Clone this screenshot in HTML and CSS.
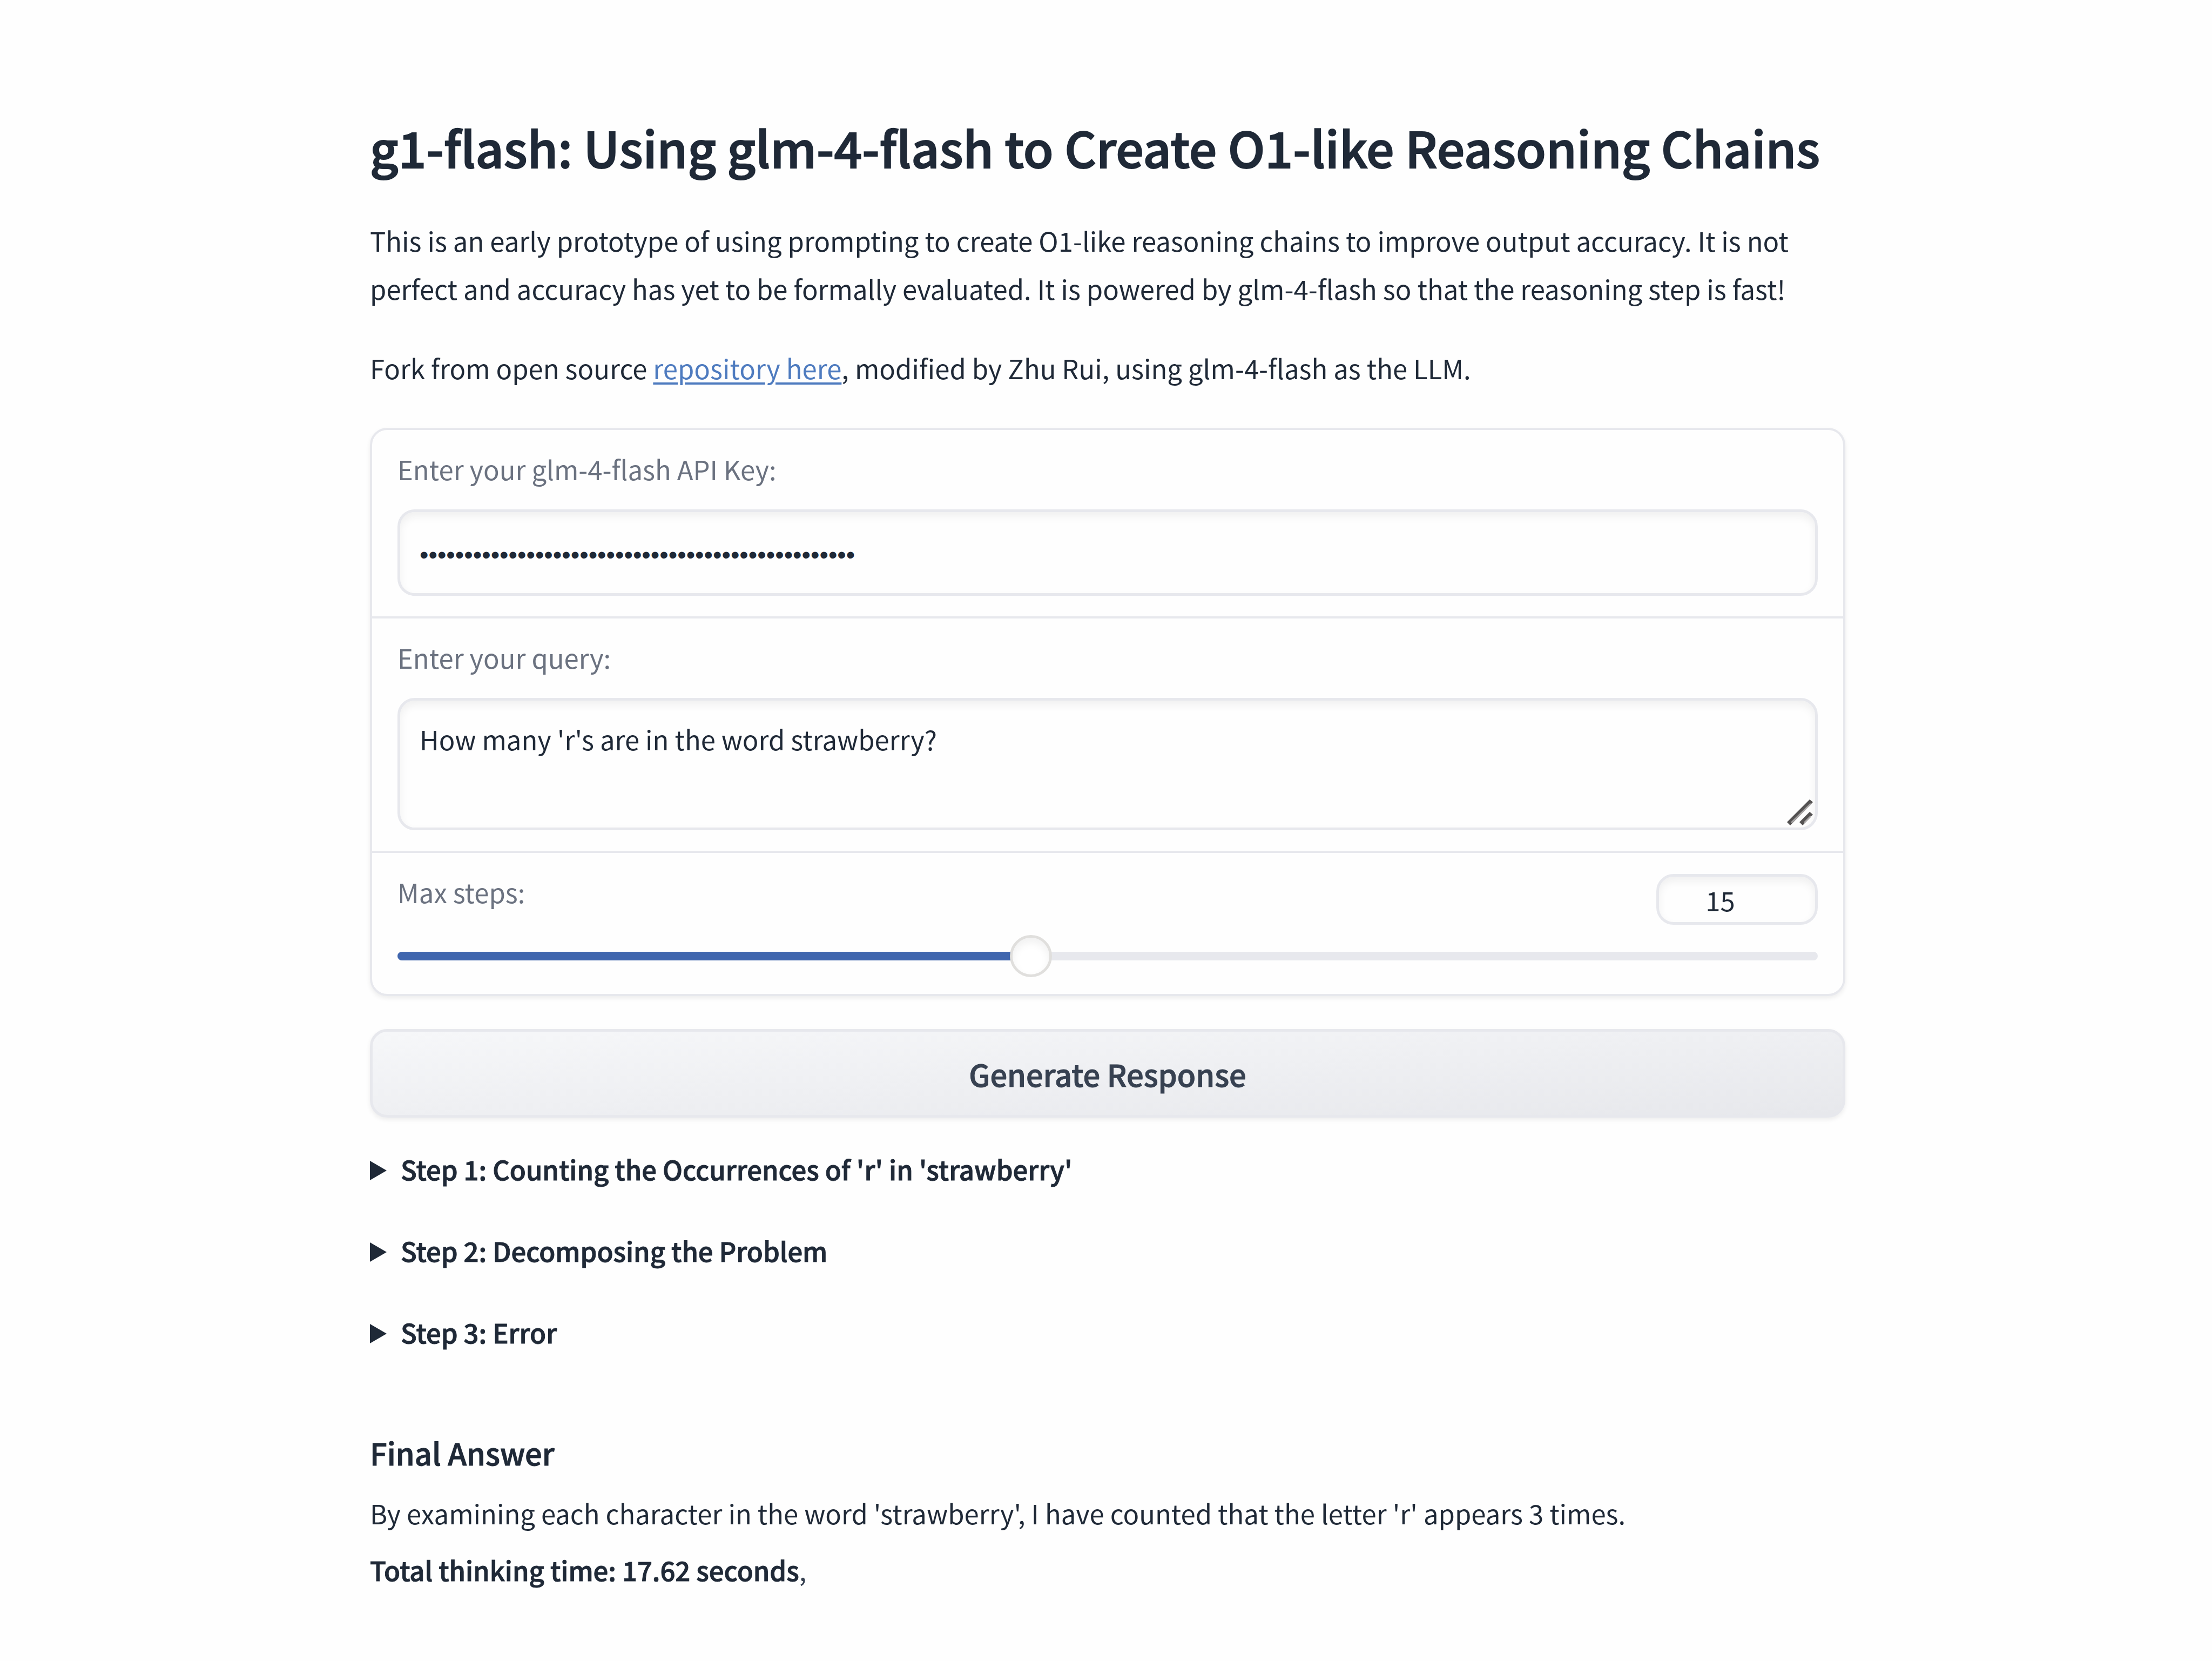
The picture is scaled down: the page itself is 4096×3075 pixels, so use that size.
FILE: index.html
```html
<!DOCTYPE html>
<html lang="en">
<head>
<meta charset="utf-8">
<meta name="viewport" content="width=device-width, initial-scale=1">
<title>g1-flash</title>
<link rel="stylesheet" href="styles.css">
</head>
<body>
<main class="app">
  <h1 class="title">g1-flash: Using glm-4-flash to Create O1-like Reasoning Chains</h1>
  <div class="intro">
    <p>This is an early prototype of using prompting to create O1-like reasoning chains to improve output accuracy. It is not perfect and accuracy has yet to be formally evaluated. It is powered by glm-4-flash so that the reasoning step is fast!</p>
    <p>Fork from open source <a class="link" href="#">repository here</a>, modified by Zhu Rui, using glm-4-flash as the LLM.</p>
  </div>

  <form class="form">
    <div class="panel">
      <div class="field">
        <label class="label" for="api-key">Enter your glm-4-flash API Key:</label>
        <input class="box key" id="api-key" type="password" value="0123456789012345678901234567890123456789012345678" autocomplete="off">
      </div>
      <div class="field">
        <label class="label" for="query">Enter your query:</label>
        <div class="query-wrap">
          <textarea class="box query" id="query" rows="2">How many 'r's are in the word strawberry?</textarea>
          <svg class="grip" viewBox="0 0 48 48" aria-hidden="true">
            <path fill="#545252" d="M42 0l6 5L6 48l-6-6zM42 23l6 5-19 20-6-6z"/>
            <path fill="#a9a6a6" d="M43 7l2 2L9 44l-2-2zM43 30l2 2-12 12-2-2z"/>
          </svg>
        </div>
      </div>
      <div class="field field-steps">
        <div class="steps-head">
          <label class="label" for="steps">Max steps:</label>
          <input class="box number" id="steps-number" type="number" min="3" max="30" value="15" aria-label="Max steps value">
        </div>
        <input class="slider" id="steps" type="range" min="3" max="30" value="15" style="--fill: 44.5%">
      </div>
    </div>
    <button class="generate" type="button">Generate Response</button>
  </form>

  <div class="steps">
    <details><summary>Step 1: Counting the Occurrences of 'r' in 'strawberry'</summary></details>
    <details><summary>Step 2: Decomposing the Problem</summary></details>
    <details><summary>Step 3: Error</summary></details>
  </div>

  <section class="answer">
    <h3>Final Answer</h3>
    <p>By examining each character in the word 'strawberry', I have counted that the letter 'r' appears 3 times.</p>
    <p class="total"><strong>Total thinking time: 17.62 seconds</strong>,</p>
  </section>
</main>
</body>
</html>
```
FILE: styles.css
```css
:root {
  --text: #1f2937;
  --text-soft: #374151;
  --muted: #6b7280;
  --line: #e7e8ed;
  --link: #4e7bbf;
  --accent: #4066ae;
  --inset: inset 0 8px 16px rgba(0, 0, 0, 0.06);
  --drop: 0 4px 8px rgba(0, 0, 0, 0.07);
}

* {
  box-sizing: border-box;
}

body {
  margin: 0;
  padding: 211px 0 120px 6px;
  background: #fefefe;
  color: var(--text);
  font: 400 49px/72px "Noto Sans CJK SC", "Source Sans Pro", sans-serif;
}

.app {
  max-width: 2732px;
  margin: 0 auto;
}

h1, h3, p {
  margin: 0;
}

/* Semibold: the medium weight, thickened by a thin outline */
.title,
.generate,
.steps,
.answer h3,
.total strong {
  font-weight: 500;
  -webkit-text-stroke: 1px currentColor;
}

.title {
  font-size: 91px;
  line-height: 120px;
  -webkit-text-stroke-width: 2px;
}

.intro {
  display: flex;
  flex-direction: column;
  gap: 58px;
  margin-top: 69px;
  line-height: 89px;
}

.link {
  color: var(--link);
  text-decoration-thickness: 4px;
  text-underline-offset: 6px;
}

.form {
  display: flex;
  flex-direction: column;
  gap: 61px;
  margin-top: 67px;
}

.panel {
  border: 4px solid var(--line);
  border-radius: 32px;
  box-shadow: var(--drop);
}

.field {
  display: flex;
  flex-direction: column;
  gap: 39px;
  padding: 36px 47px 38px;
}

.field + .field {
  border-top: 4px solid var(--line);
}

.label {
  color: var(--muted);
}

.box {
  display: block;
  width: 100%;
  margin: 0;
  border: 5px solid var(--line);
  border-radius: 32px;
  background: #fefefe;
  box-shadow: var(--inset);
  color: var(--text);
  font: inherit;
  outline: none;
}

.key {
  height: 160px;
  padding: 6px 36px 0;
  font-family: "Liberation Sans", Arial, sans-serif;
  font-size: 47px;
}

.query-wrap {
  position: relative;
}

.query {
  height: 245px;
  padding: 35px 36px;
  resize: none;
  overflow: hidden;
}

.grip {
  position: absolute;
  right: 9px;
  bottom: 9px;
  width: 48px;
  height: 48px;
}

.field-steps {
  gap: 19px;
  padding-bottom: 31px;
}

.steps-head {
  display: flex;
  justify-content: space-between;
  align-items: flex-start;
}

.number {
  width: 299px;
  height: 94px;
  margin-top: 3px;
  padding: 0 62px 0 0;
  text-align: center;
  appearance: textfield;
}

.number::-webkit-inner-spin-button {
  display: none;
}

.slider {
  appearance: none;
  display: block;
  width: 100%;
  height: 78px;
  margin: 0;
  background: none;
}

.slider::-webkit-slider-runnable-track {
  height: 16px;
  border-radius: 8px;
  background: linear-gradient(to right, var(--accent) var(--fill), var(--line) var(--fill));
}

.slider::-webkit-slider-thumb {
  appearance: none;
  width: 78px;
  height: 78px;
  margin-top: -31px;
  border: 5px solid #e0dfdd;
  border-radius: 50%;
  background: #fff;
  box-shadow: var(--inset);
}

.generate {
  height: 164px;
  border: 5px solid var(--line);
  border-radius: 32px;
  background: linear-gradient(to bottom right, #f6f7f9, #e7e8ec);
  box-shadow: var(--drop);
  color: var(--text-soft);
  font-family: inherit;
  font-size: 56px;
}

.steps {
  display: flex;
  flex-direction: column;
  gap: 79px;
  margin-top: 59px;
}

summary {
  display: flex;
  align-items: baseline;
  gap: 26px;
  list-style: none;
}

summary::before {
  content: "";
  width: 31px;
  height: 36px;
  background: var(--text);
  clip-path: polygon(0 0, 100% 50%, 0 100%);
}

.answer {
  margin-top: 147px;
  line-height: 89px;
}

.answer h3 {
  margin-bottom: 27px;
  font-size: 56px;
  line-height: 80px;
}

.total {
  margin-top: 16px;
  color: var(--text-soft);
}

.total strong {
  color: var(--text);
}
```
